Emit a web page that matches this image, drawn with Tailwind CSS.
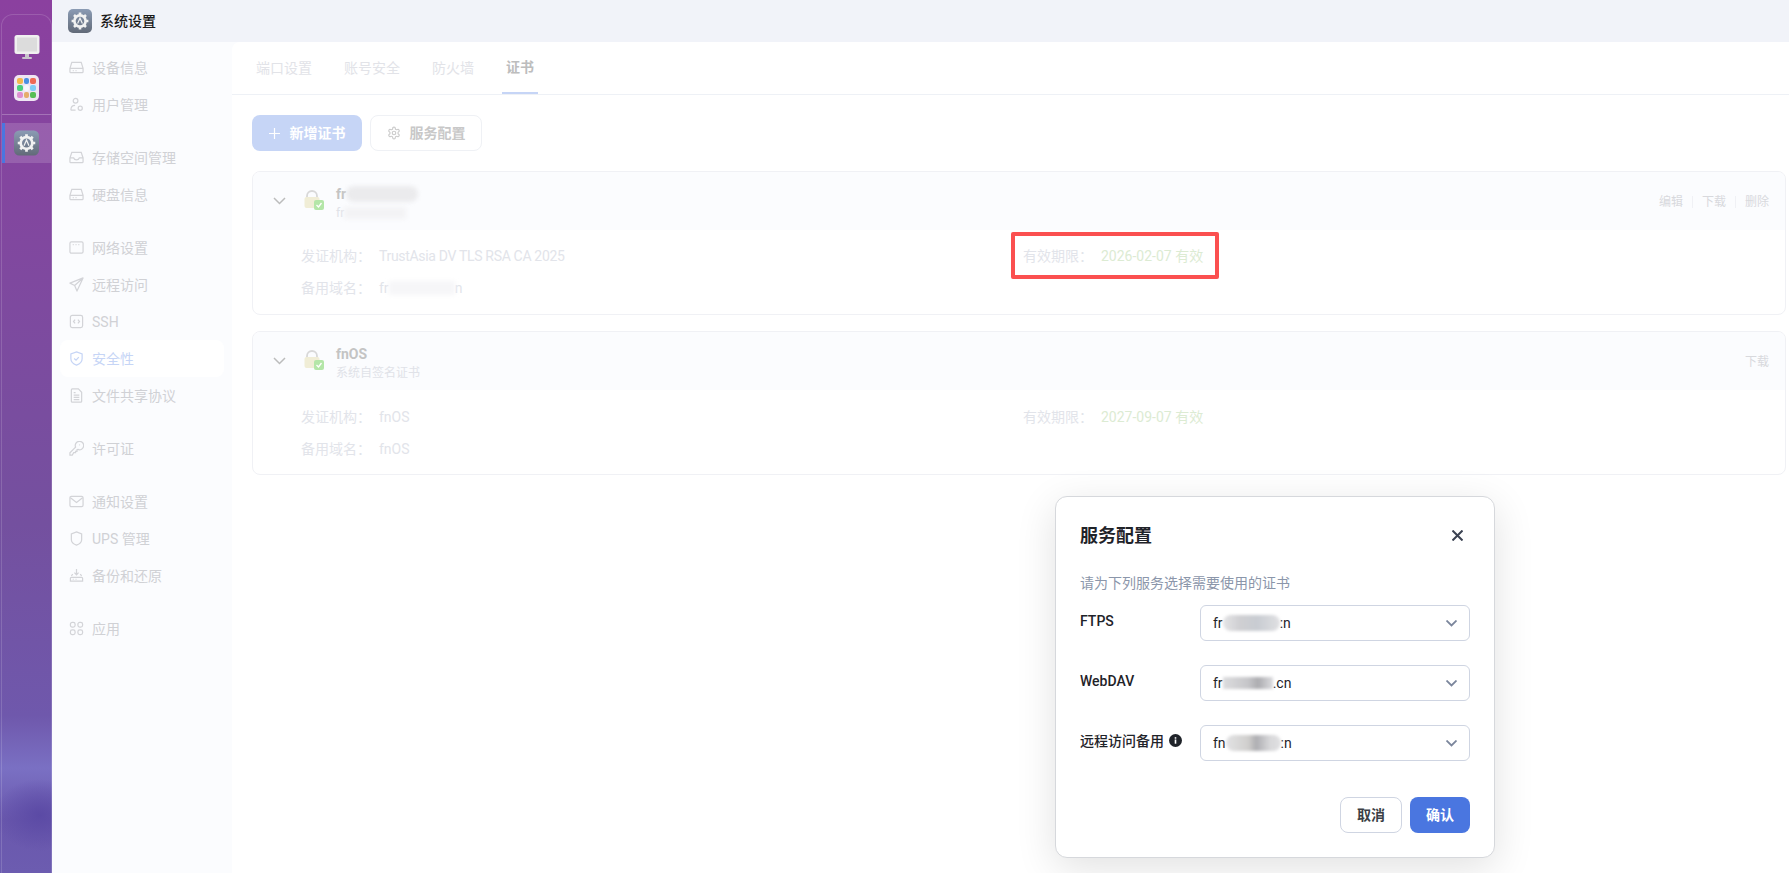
<!DOCTYPE html>
<html lang="zh-CN">
<head>
    <meta charset="UTF-8">
    <title>系统设置</title>
    <script src="https://cdn.jsdelivr.net/npm/@tailwindcss/browser@4"></script>
</head>
<body class="font-['Roboto','Noto_Sans_CJK_SC',sans-serif] text-sm bg-white overflow-hidden">
<div class="relative flex w-[1789px] h-[873px] overflow-hidden">

    <!-- Dock -->
    <aside class="w-[52px] shrink-0 pt-[14px] bg-[radial-gradient(ellipse_46px_36px_at_40px_815px,#5b4aa5_0%,transparent_100%),linear-gradient(180deg,#8b409f_0%,#7e4a9f_35%,#74509f_60%,#6f58ac_82%,#7a70c3_88%,#6a58ad_94%,#6c5cb0_100%)]">
        <div class="h-full ml-px border-l border-t border-r border-white/15 rounded-t-xl">
            <div class="h-[100px] border-b border-white/25 flex flex-col items-center pt-5 gap-[15px]">
                <svg class="w-[26px] h-[25px]" viewBox="0 0 26 25">
                    <rect x="0.5" y="0" width="25" height="19" rx="2.5" fill="#f0f0f0"/>
                    <rect x="3" y="2.5" width="20" height="14" fill="#dcdcdc"/>
                    <rect x="11" y="19" width="4" height="3" fill="#c9c4cc"/>
                    <rect x="8" y="22" width="10" height="2" rx="1" fill="#c9c4cc"/>
                </svg>
                <div class="w-[25px] h-[26px] rounded-[5px] bg-[#efe6f3] grid grid-cols-3 gap-px p-[3px]">
                    <div class="rounded-[2px] bg-[#f5b94e]"></div>
                    <div class="rounded-[2px] bg-[#4a90e2]"></div>
                    <div class="rounded-[2px] bg-[#ee6a55]"></div>
                    <div class="rounded-[2px] bg-[#4cd07d]"></div>
                    <div class="rounded-[2px] bg-[#f6f6fb]"></div>
                    <div class="rounded-[2px] bg-[#7fcdf5]"></div>
                    <div class="rounded-[2px] bg-[#dd8fd0]"></div>
                    <div class="rounded-[2px] bg-[#e5ad6b]"></div>
                    <div class="rounded-[2px] bg-[#58bf55]"></div>
                </div>
            </div>
            <div class="mt-2 h-10 bg-white/15 border-l-[3px] border-[#4a76e0] flex items-center justify-center pr-[3px]">
                <svg class="w-[25px] h-[26px]" viewBox="0 0 24 24">
                    <defs><linearGradient id="g1" x1="0" y1="0" x2="0" y2="1"><stop offset="0" stop-color="#8b9bb4"/><stop offset="1" stop-color="#626a78"/></linearGradient></defs>
                    <rect width="24" height="24" rx="5" fill="url(#g1)"/>
                    <circle cx="12" cy="12" r="5.6" fill="none" stroke="#f2f2f2" stroke-width="2.6"/>
                    <path d="M12 3.6v3M12 17.4v3M3.6 12h3M17.4 12h3M6 6l2.2 2.2M15.8 15.8L18 18M18 6l-2.2 2.2M8.2 15.8L6 18" stroke="#f2f2f2" stroke-width="2.6"/>
                    <path d="M9.6 14.6L12 9.2l2.4 5.4" fill="none" stroke="#f2f2f2" stroke-width="1.2"/>
                </svg>
            </div>
        </div>
    </aside>

    <div class="flex-1 flex flex-col min-w-0">
        <!-- Title bar -->
        <header class="h-[42px] shrink-0 bg-[#f1f3f9] flex items-center pl-4 gap-2">
            <svg class="w-6 h-6" viewBox="0 0 24 24">
                <defs><linearGradient id="g2" x1="0" y1="0" x2="0" y2="1"><stop offset="0" stop-color="#8b9bb4"/><stop offset="1" stop-color="#626a78"/></linearGradient></defs>
                <rect width="24" height="24" rx="5" fill="url(#g2)"/>
                <circle cx="12" cy="12" r="5.6" fill="none" stroke="#f2f2f2" stroke-width="2.6"/>
                <path d="M12 3.6v3M12 17.4v3M3.6 12h3M17.4 12h3M6 6l2.2 2.2M15.8 15.8L18 18M18 6l-2.2 2.2M8.2 15.8L6 18" stroke="#f2f2f2" stroke-width="2.6"/>
                <path d="M9.6 14.6L12 9.2l2.4 5.4" fill="none" stroke="#f2f2f2" stroke-width="1.2"/>
            </svg>
            <span class="text-[14px] font-medium text-[#1a1a1a]">系统设置</span>
        </header>

        <div class="flex-1 flex min-h-0 bg-[#fbfcfe]">
            <!-- Settings menu -->
            <nav class="w-[180px] shrink-0 pt-[7px] px-2 text-[#d0d1d5]">
                <div class="flex flex-col">
                    <a class="h-[37px] flex items-center gap-2 pl-[9px]">
                        <svg class="w-[15px] h-[15px]" viewBox="0 0 16 16" fill="none" stroke="#d3d4d8" stroke-width="1.3"><path d="M1 9l2-6.5h10L15 9v3.5a1 1 0 0 1-1 1H2a1 1 0 0 1-1-1zM1 9h14M4 11.3h1M7 11.3h1"/></svg>
                        设备信息
                    </a>
                    <a class="h-[37px] flex items-center gap-2 pl-[9px]">
                        <svg class="w-[15px] h-[15px]" viewBox="0 0 16 16" fill="none" stroke="#d3d4d8" stroke-width="1.3"><circle cx="7" cy="4" r="2.5"/><path d="M2 14c0-3 1.5-5 4.5-5M2 14h5"/><circle cx="12" cy="12" r="2.2"/></svg>
                        用户管理
                    </a>
                </div>
                <div class="flex flex-col mt-4">
                    <a class="h-[37px] flex items-center gap-2 pl-[9px]">
                        <svg class="w-[15px] h-[15px]" viewBox="0 0 16 16" fill="none" stroke="#d3d4d8" stroke-width="1.3"><path d="M1 8.5L3 2.5h10l2 6v4a1 1 0 0 1-1 1H2a1 1 0 0 1-1-1zM1 8.5h4c.5 1.5 1.5 2 3 2s2.5-.5 3-2h4"/></svg>
                        存储空间管理
                    </a>
                    <a class="h-[37px] flex items-center gap-2 pl-[9px]">
                        <svg class="w-[15px] h-[15px]" viewBox="0 0 16 16" fill="none" stroke="#d3d4d8" stroke-width="1.3"><path d="M1 9l2-6.5h10L15 9v3.5a1 1 0 0 1-1 1H2a1 1 0 0 1-1-1zM1 9h14M4 11.3h1M7 11.3h1"/></svg>
                        硬盘信息
                    </a>
                </div>
                <div class="flex flex-col mt-4">
                    <a class="h-[37px] flex items-center gap-2 pl-[9px]">
                        <svg class="w-[15px] h-[15px]" viewBox="0 0 16 16" fill="none" stroke="#d3d4d8" stroke-width="1.3"><rect x="1" y="2" width="14" height="12" rx="1.5"/><path d="M4 5h1M7 5h1M10 5h1"/></svg>
                        网络设置
                    </a>
                    <a class="h-[37px] flex items-center gap-2 pl-[9px]">
                        <svg class="w-[15px] h-[15px]" viewBox="0 0 16 16" fill="none" stroke="#d3d4d8" stroke-width="1.3" stroke-linejoin="round"><path d="M15 1L1 6.5l5 2.5 2.5 6zM15 1L6 9"/></svg>
                        远程访问
                    </a>
                    <a class="h-[37px] flex items-center gap-2 pl-[9px]">
                        <svg class="w-[15px] h-[15px]" viewBox="0 0 16 16" fill="none" stroke="#d3d4d8" stroke-width="1.3"><rect x="1.5" y="1.5" width="13" height="13" rx="2"/><path d="M6.5 6L4.8 8l1.7 2M9.5 6l1.7 2-1.7 2"/></svg>
                        SSH
                    </a>
                    <a class="h-[37px] flex items-center gap-2 pl-[9px] bg-white rounded-lg text-[#c6d5f6]">
                        <svg class="w-[15px] h-[15px]" viewBox="0 0 16 16" fill="none" stroke="#c6d5f6" stroke-width="1.3"><path d="M8 1l6 2.2v5c0 3-2.5 5.5-6 6.8-3.5-1.3-6-3.8-6-6.8v-5zM5.5 8l2 1.8 3-3.3"/></svg>
                        安全性
                    </a>
                    <a class="h-[37px] flex items-center gap-2 pl-[9px]">
                        <svg class="w-[15px] h-[15px]" viewBox="0 0 16 16" fill="none" stroke="#d3d4d8" stroke-width="1.3"><path d="M2.5 2a1 1 0 0 1 1-1H10l3.5 3.5V14a1 1 0 0 1-1 1h-9a1 1 0 0 1-1-1zM5 7.5h6M5 10h6M5 12.5h6M5 5h2"/></svg>
                        文件共享协议
                    </a>
                </div>
                <div class="flex flex-col mt-4">
                    <a class="h-[37px] flex items-center gap-2 pl-[9px]">
                        <svg class="w-[15px] h-[15px]" viewBox="0 0 16 16" fill="none" stroke="#d3d4d8" stroke-width="1.3"><path d="M1 15v-2.5L7 6.500A4.500 4.500 0 1 1 9.500 9l-1 .3V11H7v1.500H5L3.500 15zM11 4.200h.8"/></svg>
                        许可证
                    </a>
                </div>
                <div class="flex flex-col mt-4">
                    <a class="h-[37px] flex items-center gap-2 pl-[9px]">
                        <svg class="w-[15px] h-[15px]" viewBox="0 0 16 16" fill="none" stroke="#d3d4d8" stroke-width="1.3"><rect x="1" y="2.5" width="14" height="11" rx="1.5"/><path d="M1.500 4L8 9l6.500-5"/></svg>
                        通知设置
                    </a>
                    <a class="h-[37px] flex items-center gap-2 pl-[9px]">
                        <svg class="w-[15px] h-[15px]" viewBox="0 0 16 16" fill="none" stroke="#d3d4d8" stroke-width="1.3"><path d="M8 1l5.5 2.2v6c0 2.500-2 4.500-5.500 5.800-3.500-1.300-5.500-3.300-5.500-5.800v-6z"/></svg>
                        UPS 管理
                    </a>
                    <a class="h-[37px] flex items-center gap-2 pl-[9px]">
                        <svg class="w-[15px] h-[15px]" viewBox="0 0 16 16" fill="none" stroke="#d3d4d8" stroke-width="1.3"><path d="M1.5 11a1 1 0 0 1 1-1h11a1 1 0 0 1 1 1v3h-13zM8 1v6M5.800 5L8 7.300 10.200 5M2.500 8.500L4 6.500M13.500 8.500L12 6.500M4 12h1M7 12h1"/></svg>
                        备份和还原
                    </a>
                </div>
                <div class="flex flex-col mt-4">
                    <a class="h-[37px] flex items-center gap-2 pl-[9px]">
                        <svg class="w-[15px] h-[15px]" viewBox="0 0 16 16" fill="none" stroke="#d3d4d8" stroke-width="1.3"><rect x="1.5" y="1.5" width="5" height="5" rx="2"/><rect x="9.5" y="1.5" width="5" height="5" rx="2"/><rect x="1.5" y="9.5" width="5" height="5" rx="2"/><rect x="9.5" y="9.5" width="5" height="5" rx="2"/></svg>
                        应用
                    </a>
                </div>
            </nav>

            <!-- Main -->
            <main class="flex-1 min-w-0 bg-white rounded-tl-lg">
                <div class="h-[53px] border-b border-[#eef1f6] flex pl-6 gap-8 text-[#e2e3e8]">
                    <a class="h-[52px] flex items-center">端口设置</a>
                    <a class="h-[52px] flex items-center">账号安全</a>
                    <a class="h-[52px] flex items-center">防火墙</a>
                    <a class="h-[52px] -ml-1 flex items-center px-1 font-bold text-[#bdbdbd] border-b-2 border-[#c6d5f6]">证书</a>
                </div>

                <div class="pl-5 pr-[3px] pt-5">
                    <div class="flex gap-2">
                        <button class="w-[110px] h-9 rounded-lg bg-[#c6d5f6] text-white font-bold flex items-center justify-center gap-[10px]">
                            <svg class="w-[11px] h-[11px]" viewBox="0 0 11 11" stroke="#ffffff" stroke-width="1.2"><path d="M5.5 0v11M0 5.5h11"/></svg>
                            新增证书
                        </button>
                        <button class="w-[112px] h-9 rounded-lg border border-[#eff1f5] text-[#c8c8c8] font-bold flex items-center justify-center gap-[9px]">
                            <svg class="w-[14px] h-[14px]" viewBox="0 0 24 24" fill="none" stroke="#cccccc" stroke-width="2"><path d="M12.22 2h-.44a2 2 0 0 0-2 2v.18a2 2 0 0 1-1 1.73l-.43.25a2 2 0 0 1-2 0l-.15-.08a2 2 0 0 0-2.73.73l-.22.38a2 2 0 0 0 .73 2.73l.15.1a2 2 0 0 1 1 1.72v.51a2 2 0 0 1-1 1.74l-.15.09a2 2 0 0 0-.73 2.73l.22.38a2 2 0 0 0 2.73.73l.15-.08a2 2 0 0 1 2 0l.43.25a2 2 0 0 1 1 1.73V20a2 2 0 0 0 2 2h.44a2 2 0 0 0 2-2v-.18a2 2 0 0 1 1-1.73l.43-.25a2 2 0 0 1 2 0l.15.08a2 2 0 0 0 2.73-.73l.22-.39a2 2 0 0 0-.73-2.73l-.15-.08a2 2 0 0 1-1-1.74v-.5a2 2 0 0 1 1-1.74l.15-.09a2 2 0 0 0 .73-2.73l-.22-.38a2 2 0 0 0-2.73-.73l-.15.08a2 2 0 0 1-2 0l-.43-.25a2 2 0 0 1-1-1.73V4a2 2 0 0 0-2-2z"/><circle cx="12" cy="12" r="3"/></svg>
                            服务配置
                        </button>
                    </div>

                    <!-- Certificate 1 -->
                    <section class="mt-5 h-[144px] border border-[#f0f1f5] rounded-lg overflow-hidden">
                        <div class="h-[58px] bg-[#fbfcfe] flex items-center pl-5 pr-4">
                            <svg class="w-[13px] h-2" viewBox="0 0 13 8" fill="none" stroke="#bcbcbc" stroke-width="1.5"><path d="M1 1l5.5 5.5L12 1"/></svg>
                            <svg class="ml-[18px] w-[21px] h-[22px]" viewBox="0 0 21 22">
                                <path d="M3 8V6a5 5 0 0 1 10 0v2" fill="none" stroke="#d8d8d8" stroke-width="1.8"/>
                                <rect x="0.5" y="7" width="15" height="11" rx="2" fill="#f0edd6"/>
                                <rect x="10" y="10" width="10" height="10" rx="2" fill="#b4e6a8"/>
                                <path d="M12.5 15l2 2 3-4" fill="none" stroke="#ffffff" stroke-width="1.3"/>
                            </svg>
                            <div class="ml-[11px] pt-[2px] flex flex-col">
                                <div class="h-5 flex items-center font-bold text-[#c4c4c4]">fr<span class="inline-block w-[72px] h-[16px] rounded-full blur-[2px] bg-[#ebebed]"></span></div>
                                <div class="h-4 mt-px flex items-center text-xs text-[#e0e2e8]">fr<span class="inline-block w-[62px] h-[12px] blur-[2px] bg-[#f3f3f5]"></span></div>
                            </div>
                            <div class="ml-auto mt-[2px] flex items-center text-xs text-[#d8d9dd]">
                                <a>编辑</a>
                                <span class="w-px h-3 bg-[#f0f1f5] mx-[9px]"></span>
                                <a>下载</a>
                                <span class="w-px h-3 bg-[#f0f1f5] mx-[9px]"></span>
                                <a>删除</a>
                            </div>
                        </div>
                        <div class="grid grid-cols-[722px_1fr] pl-12 pt-[10px] auto-rows-[32px] text-[#e2e4ea]">
                            <div class="flex items-center"><span class="w-[78px]">发证机构：</span><span class="tracking-[-0.32px]">TrustAsia DV TLS RSA CA 2025</span></div>
                            <div class="flex items-center"><span class="w-[78px]">有效期限：</span><span class="text-[#dcebd3]">2026-02-07 有效</span></div>
                            <div class="flex items-center"><span class="w-[78px]">备用域名：</span>fr<span class="inline-block w-[66px] h-[14px] blur-[2px] bg-[#f6f6f8]"></span>n</div>
                        </div>
                    </section>

                    <!-- Certificate 2 -->
                    <section class="mt-4 h-[144px] border border-[#f0f1f5] rounded-lg overflow-hidden">
                        <div class="h-[58px] bg-[#fbfcfe] flex items-center pl-5 pr-4">
                            <svg class="w-[13px] h-2" viewBox="0 0 13 8" fill="none" stroke="#bcbcbc" stroke-width="1.5"><path d="M1 1l5.5 5.5L12 1"/></svg>
                            <svg class="ml-[18px] w-[21px] h-[22px]" viewBox="0 0 21 22">
                                <path d="M3 8V6a5 5 0 0 1 10 0v2" fill="none" stroke="#d8d8d8" stroke-width="1.8"/>
                                <rect x="0.5" y="7" width="15" height="11" rx="2" fill="#f0edd6"/>
                                <rect x="10" y="10" width="10" height="10" rx="2" fill="#b4e6a8"/>
                                <path d="M12.5 15l2 2 3-4" fill="none" stroke="#ffffff" stroke-width="1.3"/>
                            </svg>
                            <div class="ml-[11px] pt-[2px] flex flex-col">
                                <div class="h-5 flex items-center font-bold text-[#c4c4c4]">fnOS</div>
                                <div class="h-4 mt-px flex items-center text-xs text-[#e0e2e8]">系统自签名证书</div>
                            </div>
                            <div class="ml-auto mt-[2px] text-xs text-[#d8d9dd]"><a>下载</a></div>
                        </div>
                        <div class="grid grid-cols-[722px_1fr] pl-12 pt-[11px] auto-rows-[32px] text-[#e2e4ea]">
                            <div class="flex items-center"><span class="w-[78px]">发证机构：</span>fnOS</div>
                            <div class="flex items-center"><span class="w-[78px]">有效期限：</span><span class="text-[#dcebd3]">2027-09-07 有效</span></div>
                            <div class="flex items-center"><span class="w-[78px]">备用域名：</span>fnOS</div>
                        </div>
                    </section>
                </div>
            </main>
        </div>
    </div>

    <!-- Annotation box -->
    <div class="absolute left-[1011px] top-[232px] w-[208px] h-[47px] border-4 border-[#fb5050] rounded-[2px]"></div>

    <!-- Dialog -->
    <div class="absolute left-[1055px] top-[496px] w-[440px] h-[362px] bg-white border border-[#d6d8dc] rounded-xl shadow-[0_10px_40px_rgba(0,0,0,0.12)] px-6 pt-[25px] flex flex-col">
        <div class="h-7 flex items-center justify-between">
            <h2 class="text-lg font-bold text-[#1f2329]">服务配置</h2>
            <svg class="w-[11px] h-[11px] mr-[7px] -mt-px" viewBox="0 0 11 11" stroke="#3b4252" stroke-width="2"><path d="M0.5 0.5l10 10M10.5 0.5l-10 10"/></svg>
        </div>
        <p class="mt-[22px] h-[22px] leading-[22px] text-[#8b96aa]">请为下列服务选择需要使用的证书</p>
        <div class="mt-[11px] flex flex-col gap-6">
            <div class="flex">
                <label class="w-[120px] pt-[5px] leading-[22px] font-medium text-[#1f2329]">FTPS</label>
                <div class="flex-1 h-9 border border-[#cfd5e2] rounded-md flex items-center pl-3 pr-3 text-[#1f2329]">
                    fr<span class="inline-block w-[57px] h-[16px] rounded-full blur-[1.5px] bg-[linear-gradient(90deg,#e4e4e6,#cfcfd2_30%,#c8ccd2_60%,#e0e0e2)]"></span>:n
                    <svg class="ml-auto w-[11px] h-[7px]" viewBox="0 0 11 7" fill="none" stroke="#7b869c" stroke-width="1.8"><path d="M0.5 0.5l5 5 5-5"/></svg>
                </div>
            </div>
            <div class="flex">
                <label class="w-[120px] pt-[5px] leading-[22px] font-medium text-[#1f2329]">WebDAV</label>
                <div class="flex-1 h-9 border border-[#cfd5e2] rounded-md flex items-center pl-3 pr-3 text-[#1f2329]">
                    fr<span class="inline-block w-[50px] h-[12px] blur-[1.5px] bg-[linear-gradient(90deg,#dcdcde,#c6c6c9_50%,#acacb0_70%,#dcdcdf)]"></span>.cn
                    <svg class="ml-auto w-[11px] h-[7px]" viewBox="0 0 11 7" fill="none" stroke="#7b869c" stroke-width="1.8"><path d="M0.5 0.5l5 5 5-5"/></svg>
                </div>
            </div>
            <div class="flex">
                <label class="w-[120px] pt-[5px] leading-[22px] font-medium text-[#1f2329] flex items-start gap-[5px]">
                    远程访问备用
                    <svg class="w-[13px] h-[13px] mt-[4px]" viewBox="0 0 13 13"><circle cx="6.5" cy="6.5" r="6.5" fill="#1f2329"/><rect x="5.7" y="5.5" width="1.6" height="4.2" fill="#ffffff"/><rect x="5.7" y="3.2" width="1.6" height="1.5" fill="#ffffff"/></svg>
                </label>
                <div class="flex-1 h-9 border border-[#cfd5e2] rounded-md flex items-center pl-3 pr-3 text-[#1f2329]">
                    fn<span class="inline-block w-[55px] h-[16px] rounded-full blur-[1.5px] bg-[linear-gradient(90deg,#e2e2e4,#d0cfcd_40%,#aeaeb2_55%,#d8d8da_80%,#e0e0e2)]"></span>:n
                    <svg class="ml-auto w-[11px] h-[7px]" viewBox="0 0 11 7" fill="none" stroke="#7b869c" stroke-width="1.8"><path d="M0.5 0.5l5 5 5-5"/></svg>
                </div>
            </div>
        </div>
        <div class="mt-9 flex justify-end gap-2">
            <button class="w-[62px] h-9 rounded-lg border border-[#cfd5e2] font-bold text-[#3b3f46]">取消</button>
            <button class="w-[60px] h-9 rounded-lg bg-[#4a76e0] font-bold text-white">确认</button>
        </div>
    </div>
</div>
</body>
</html>
